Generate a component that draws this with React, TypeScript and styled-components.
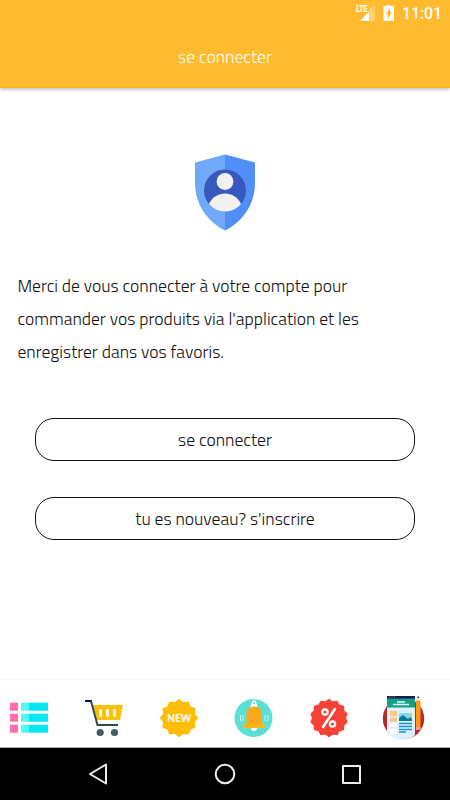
import React from "react";
import styled, { createGlobalStyle } from "styled-components";

const GlobalStyle = createGlobalStyle`
  * { box-sizing: border-box; }
  html, body { margin: 0; padding: 0; background: #fff; }
  body { font-family: "Titillium Web", Cairo, Roboto, "Open Sans", sans-serif; color: #111; }
`;

const Screen = styled.div`
  width: 450px;
  height: 800px;
  display: flex;
  flex-direction: column;
  overflow: hidden;
  background: #fff;
`;

const Header = styled.header`
  height: 88px;
  flex: none;
  background: #ffbb2d;
  border-bottom: 1px solid #fdb515;
  box-shadow: 0 1px 4px rgba(0, 0, 0, 0.32);
  color: #fff;
`;

const StatusBar = styled.div`
  height: 28px;
  display: flex;
  justify-content: flex-end;
  padding-right: 9px;
`;

const Clock = styled.span`
  width: 39px;
  margin-left: 6px;
  font: 500 16px/28px Roboto, sans-serif;
  letter-spacing: -0.15px;
  white-space: nowrap;
`;

const Title = styled.h1`
  margin: 0;
  height: 58px;
  text-align: center;
  font-size: 17.6px;
  font-weight: 300;
  line-height: 58px;
`;

const Main = styled.main`
  flex: 1;
  display: flex;
  flex-direction: column;
  align-items: center;
  padding-top: 65px;
`;

const Message = styled.p`
  width: 100%;
  margin: 38px 0 0;
  padding-left: 17.5px;
  font-size: 17.6px;
  font-weight: 300;
  line-height: 33px;
`;

const Line = styled.span`
  display: block;
  white-space: nowrap;
`;

const Actions = styled.div`
  width: 380px;
  margin-top: 50px;
  display: flex;
  flex-direction: column;
  gap: 36px;
`;

const ActionButton = styled.button`
  height: 43px;
  padding: 0;
  border: 1px solid #111;
  border-radius: 19px;
  background: #fff;
  color: #111;
  font-family: inherit;
  font-size: 17.6px;
  font-weight: 300;
`;

const TabBar = styled.nav`
  height: 68px;
  flex: none;
  display: flex;
  align-items: flex-start;
  gap: 35px;
  padding: 18px 0 0 9px;
  border-bottom: 1px solid #aaa;
  box-shadow: 0 -1px 2px rgba(0, 0, 0, 0.05);
`;

const SystemBar = styled.footer`
  height: 52px;
  flex: none;
  display: flex;
  align-items: center;
  justify-content: space-between;
  padding: 0 86px;
  background: #000;
`;

const Icon = styled.svg`
  display: block;
  flex: none;
`;

const PageSvg = styled(Icon)`
  margin: -3px 0 0 -2px;
`;

const BadgeText = styled.text`
  font: 900 11.5px Lato, sans-serif;
`;

const LteText = styled.text`
  font: 900 9.5px Roboto, sans-serif;
`;

function burst(points: number, outer: number, inner: number) {
  return Array.from({ length: points * 2 }, (_, i) => {
    const r = i % 2 ? inner : outer;
    const a = (Math.PI * i) / points - Math.PI / 2;
    return `${20 + r * Math.cos(a)},${20 + r * Math.sin(a)}`;
  }).join(" ");
}

const StatusIcons = () => (
  <Icon width="41" height="28" viewBox="0 0 41 28" fill="#fff">
    <LteText x="1.3" y="12.2" textLength="11" lengthAdjust="spacingAndGlyphs">LTE</LteText>
    <path d="M14 11V9l6-4v16H5l9-9z" opacity=".32" />
    <path d="M5 21l9-9v9z" />
    <path fillRule="evenodd" d="M29 6h2.500V5h4v1H38q1 0 1 1v13q0 1-1 1h-8.500q-1 0-1-1V7q0-1 .5-1zM35 8l-4 6h2v5l4-7h-2z" />
  </Icon>
);

const Shield = () => (
  <Icon width="62" height="78" viewBox="0 0 62 78">
    <path d="M31 1.500L1 9.500v19.500c0 23 12 39 30 48.500z" fill="#70a8fa" />
    <path d="M31 1.500l30 8v19.500c0 23-12 39-30 48.500z" fill="#508ff7" />
    <circle cx="31" cy="37.500" r="21" fill="#3759bd" />
    <circle cx="31" cy="28.500" r="8.400" fill="#f1f1f1" />
    <path d="M15 51c6-14 26-14 32 0-8 10-24 10-32 0z" fill="#f1f1f1" />
  </Icon>
);

const ListIcon = () => (
  <Icon width="40" height="40" viewBox="0 0 40 40">
    {[4.7, 15.7, 26.7].map((y) => (
      <g key={y}>
        <path d={`M1 ${y}h8v8H1z`} fill="#ff6daf" />
        <path d={`M12 ${y}h8v8h-8z`} fill="#4ff8fb" />
        <path d={`M20 ${y}h19v8H20z`} fill="#00e9f3" />
      </g>
    ))}
  </Icon>
);

const CartIcon = () => (
  <Icon width="40" height="40" viewBox="0 0 40 40">
    <path d="M9 7h30l-3 15H13z" fill="#ffc00c" />
    <path d="M1 3h7" stroke="#07133f" strokeWidth="2" fill="none" />
    <path d="M7 3l6.500 24H34" stroke="#304852" strokeWidth="2" fill="none" />
    <path d="M16.500 12.500v5M23.500 12.500v5M30.500 12.500v5" stroke="#fff" strokeWidth="2.800" strokeLinecap="round" />
    <circle cx="16.200" cy="34.500" r="3.600" fill="#435b67" />
    <circle cx="30.500" cy="34.500" r="3.600" fill="#435b67" />
  </Icon>
);

const NewIcon = () => (
  <Icon width="40" height="40" viewBox="0 0 40 40">
    <polygon points={burst(12, 18, 15.3)} fill="#ffbd05" stroke="#ffbd05" strokeWidth="2" strokeLinejoin="round" />
    <BadgeText x="8.200" y="24.200" textLength="24" lengthAdjust="spacingAndGlyphs" fill="#fff">NEW</BadgeText>
  </Icon>
);

const BellIcon = () => (
  <Icon width="40" height="40" viewBox="0 0 40 40">
    <circle cx="19.500" cy="20" r="19" fill="#5be0d6" />
    <path d="M16 10l2-6.500q2-3 4 0l2 6.500z" fill="#fff" />
    <circle cx="20" cy="5" r="1.100" fill="#5be0d6" />
    <path d="M17 30h6q0 3-3 3t-3-3z" fill="#fff" />
    <path d="M12.500 26V15.500q0-7 7.500-7t7.500 7V26z" fill="#fba719" />
    <path d="M11 25.500h18q2.500 1 2.500 4.500h-23q0-3.500 2.500-4.500z" fill="#ffb318" />
    <path d="M9 17v6M31 17v6M6.500 17v6M33.500 17l1 3-1 3" stroke="#c8f5f0" strokeWidth="1" fill="none" />
  </Icon>
);

const PercentIcon = () => (
  <Icon width="40" height="40" viewBox="0 0 40 40">
    <polygon points={burst(14, 18.6, 16.4)} fill="#f44336" stroke="#f44336" strokeWidth="1.200" strokeLinejoin="round" />
    <g fill="none" stroke="#fff">
      <circle cx="16" cy="14" r="2.700" strokeWidth="2.200" />
      <circle cx="23.500" cy="26" r="2.700" strokeWidth="2.200" />
      <path d="M26 11L14 29" strokeWidth="2.500" strokeLinecap="round" />
    </g>
  </Icon>
);

const PageIcon = () => (
  <PageSvg width="44" height="46" viewBox="0 0 44 46">
    <circle cx="21.500" cy="23.500" r="20.700" fill="#b82824" />
    <path d="M5 2h28v38q-5 5-14 4-9 0-14-6z" fill="#dcf1fb" />
    <path d="M5 1h28v3H5z" fill="#161b58" />
    <path d="M5 3.500h28v9H5z" fill="#12a184" />
    <path d="M7 2h1M9.500 2h1M12 2h1" stroke="#e77" />
    <path d="M15 7h8M11 9.500h16" stroke="#e4fff6" strokeWidth="1.500" />
    <path d="M8 16h7v5H8zM8 22.500h7v4H8z" fill="#ffc477" />
    <path d="M8 28h7v4H8zM8 34h7v5H8z" fill="#fff" />
    <path d="M17 18h13v8H17z" fill="#83d8f5" />
    <path d="M17 26v-3l4-3 5 4 2-2 2 2v2z" fill="#087b96" />
    <circle cx="28" cy="19.500" r="1.300" fill="#ffca28" />
    <path d="M17 28.500h13M17 31.500h13M17 34.500h13M17 37h7" stroke="#1896bd" strokeWidth="1.300" />
    <path d="M34 6l2-3 2.500 3v28H34z" fill="#ff9618" />
    <path d="M34 6l2.200-4 2.300 4z" fill="#f5d7ac" />
    <path d="M35.200 3l1-2 1 2z" fill="#161b58" />
    <path d="M34 32h4.500v3H34z" fill="#f59bac" />
  </PageSvg>
);

const icons = [ListIcon, CartIcon, NewIcon, BellIcon, PercentIcon, PageIcon];

export default function App() {
  return (
    <>
      <GlobalStyle />
      <Screen>
        <Header>
          <StatusBar>
            <StatusIcons />
            <Clock>11:01</Clock>
          </StatusBar>
          <Title>se connecter</Title>
        </Header>
        <Main>
          <Shield />
          <Message>
            <Line>Merci de vous connecter à votre compte pour</Line>
            <Line>commander vos produits via l'application et les</Line>
            <Line>enregistrer dans vos favoris.</Line>
          </Message>
          <Actions>
            <ActionButton>se connecter</ActionButton>
            <ActionButton>tu es nouveau? s'inscrire</ActionButton>
          </Actions>
        </Main>
        <TabBar>
          {icons.map((TabIcon, i) => <TabIcon key={i} />)}
        </TabBar>
        <SystemBar>
          <Icon width="24" height="24" viewBox="0 0 24 24" fill="none" stroke="#eee" strokeWidth="2" strokeLinejoin="round">
            <path d="M4 12L20 2.500v19z" />
          </Icon>
          <Icon width="24" height="24" viewBox="0 0 24 24" fill="none" stroke="#eee" strokeWidth="2">
            <circle cx="12" cy="12" r="9.300" />
          </Icon>
          <Icon width="24" height="24" viewBox="0 0 24 24" fill="none" stroke="#eee" strokeWidth="2" strokeLinejoin="round">
            <path d="M3 4h17v17H3z" />
          </Icon>
        </SystemBar>
      </Screen>
    </>
  );
}
